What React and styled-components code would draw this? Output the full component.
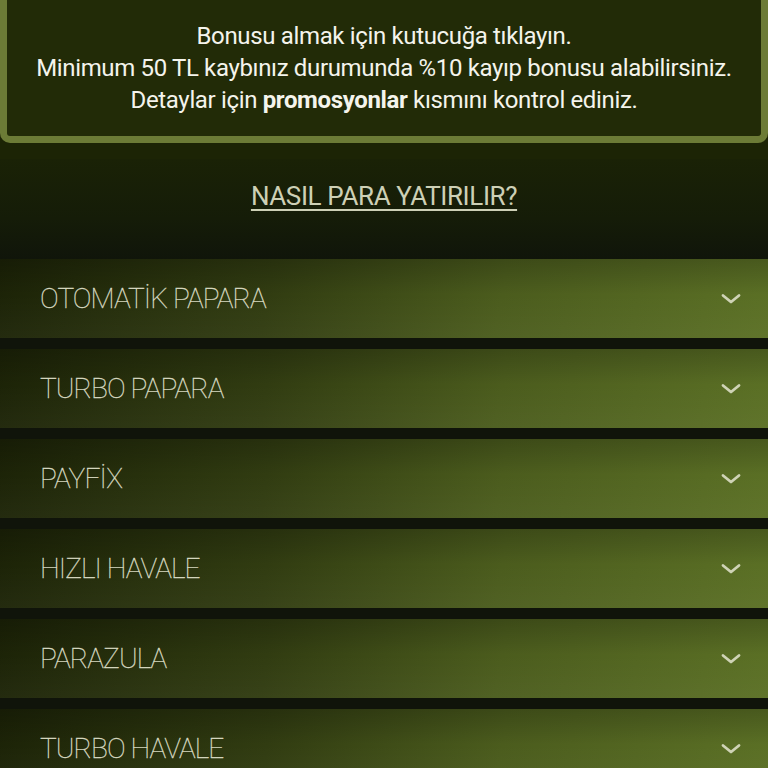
import React from "react";
import styled, { createGlobalStyle } from "styled-components";

const Global = createGlobalStyle`
  html, body { margin: 0; padding: 0; background: #1c2405; }
  body { font-family: Roboto, "Noto Sans", sans-serif; width: 768px; height: 768px; overflow: hidden; }
`;

const Page = styled.div`
  display: flex;
  flex-direction: column;
  width: 768px;
`;

const Notice = styled.div`
  background: #222b07;
  border: 7px solid #6c7b36;
  border-top: none;
  border-radius: 0 0 10px 10px;
  padding: 20px 0 20px;
  color: #f4f4ec;
  font-size: 24px;
  line-height: 32px;
  text-align: center;
  letter-spacing: -0.35px;
  b { font-weight: 700; }
`;

const Section = styled.div`
  margin-top: 16px;
  background: linear-gradient(180deg, #1a2206 0%, #151c08 60%, #10150a 100%);
  display: flex;
  flex-direction: column;
  align-items: center;
  padding: 17px 0 43px;
`;

const HowTo = styled.a`
  color: #cdd0b6;
  font-size: 26px;
  font-weight: 400;
  line-height: 40px;
  text-decoration: underline;
  text-underline-offset: 4px;
  text-decoration-thickness: 2px;
  letter-spacing: -0.4px;
`;

const List = styled.div`
  display: flex;
  flex-direction: column;
  gap: 11px;
  background: #10140a;
`;

const Row = styled.div`
  height: 79px;
  display: flex;
  align-items: center;
  justify-content: space-between;
  padding: 0 26px 0 40px;
  background:
    linear-gradient(180deg, rgba(0,0,0,0.2) 0%, rgba(0,0,0,0) 45%, rgba(255,255,255,0.03) 100%),
    linear-gradient(100deg, #1c2307 0%, #313c11 35%, #4b5c1d 65%, #5b7025 100%);
`;

const Label = styled.span`
  color: #d8dac2;
  font-size: 28px;
  font-weight: 100;
  letter-spacing: -0.9px;
  -webkit-text-stroke: 0.3px #d8dac2;
`;

const Chevron = () => (
  <svg width="22" height="14" viewBox="0 0 22 14" fill="none">
    <path d="M3 3.5 L11 10 L19 3.5" stroke="#cfd3b6" strokeWidth="2.8" strokeLinecap="round" strokeLinejoin="round" />
  </svg>
);

const items = ["OTOMATİK PAPARA", "TURBO PAPARA", "PAYFİX", "HIZLI HAVALE", "PARAZULA", "TURBO HAVALE"];

export default function App() {
  return (
    <Page>
      <Global />
      <Notice>
        Bonusu almak için kutucuğa tıklayın.
        <br />
        Minimum 50 TL kaybınız durumunda %10 kayıp bonusu alabilirsiniz.
        <br />
        Detaylar için <b>promosyonlar</b> kısmını kontrol ediniz.
      </Notice>
      <Section>
        <HowTo>NASIL PARA YATIRILIR?</HowTo>
      </Section>
      <List>
        {items.map((t) => (
          <Row key={t}>
            <Label>{t}</Label>
            <Chevron />
          </Row>
        ))}
      </List>
    </Page>
  );
}
